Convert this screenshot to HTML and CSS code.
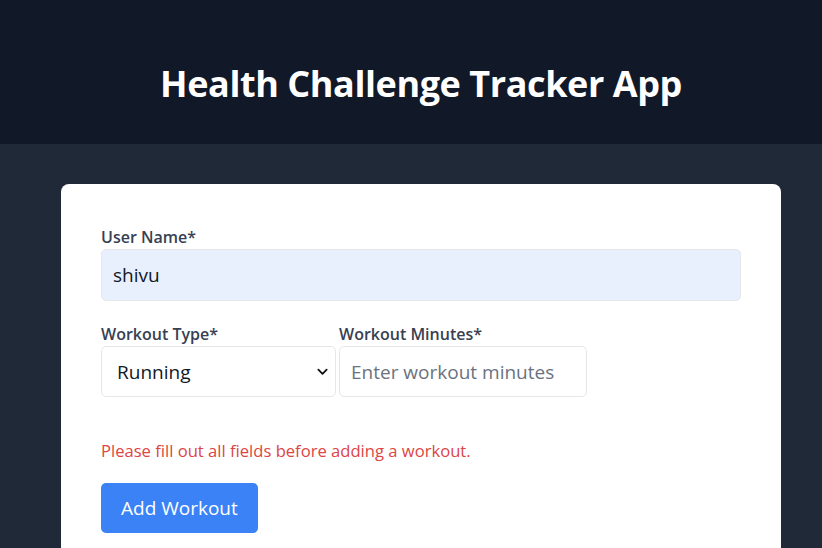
FILE: index.html
```html
<!DOCTYPE html>
<html lang="en">
<head>
<meta charset="utf-8">
<title>Health Challenge Tracker App</title>
<link rel="stylesheet" href="styles.css">
</head>
<body>
<div class="page">
  <header class="header">
    <h1 class="title">Health Challenge Tracker App</h1>
  </header>
  <main class="main">
    <section class="card">
      <div class="field">
        <label class="label" for="name">User Name*</label>
        <input class="input input-filled" id="name" type="text" value="shivu">
      </div>
      <div class="row">
        <div class="col">
          <label class="label" for="type">Workout Type*</label>
          <div class="select">
            <span class="select-text">Running</span>
            <svg class="chevron" viewBox="0 0 12 8" width="12" height="8"><path d="M1.5 1.5 L6 6 L10.5 1.5" fill="none" stroke="#111" stroke-width="2" stroke-linecap="round" stroke-linejoin="round"/></svg>
          </div>
        </div>
        <div class="col">
          <label class="label" for="mins">Workout Minutes*</label>
          <input class="input input-mins" id="mins" type="text" placeholder="Enter workout minutes">
        </div>
      </div>
      <p class="error">Please fill out all fields before adding a workout.</p>
      <button class="btn" type="button">Add Workout</button>
    </section>
  </main>
</div>
</body>
</html>
```
FILE: styles.css
```css
html, body {
  margin: 0;
  padding: 0;
  overflow: hidden;
  background: #1f2937;
}
body {
  font-family: "Open Sans", "Noto Sans", sans-serif;
  color: #374151;
}
.page {
  width: 842px;
  height: 548px;
  display: flex;
  flex-direction: column;
}
.header {
  background: #111827;
  height: 144px;
  flex: none;
  display: flex;
  align-items: center;
  justify-content: center;
}
.title {
  margin: 24px 0 0;
  color: #ffffff;
  font-size: 36px;
  font-weight: 700;
  line-height: 40px;
  letter-spacing: -0.42px;
}
.main {
  flex: 1;
  min-height: 0;
  padding-top: 40px;
  display: flex;
  flex-direction: column;
}
.card {
  flex: 1;
  width: 720px;
  margin: 0 auto;
  background: #ffffff;
  border-radius: 8px 8px 0 0;
  padding: 41px 40px 0;
  box-sizing: border-box;
}
.field {
  display: flex;
  flex-direction: column;
}
.label {
  display: block;
  font-size: 16px;
  font-weight: 600;
  line-height: 24px;
  color: #374151;
}
.input {
  box-sizing: border-box;
  font-family: inherit;
  border: 1px solid #e5e7eb;
  border-radius: 5px;
  outline: none;
  color: #111827;
}
.input-filled {
  width: 640px;
  height: 52px;
  background: #e8f0fe;
  font-size: 19px;
  padding: 0 11px;
}
.row {
  display: flex;
  gap: 3px;
  margin-top: 21px;
}
.col {
  display: flex;
  flex-direction: column;
}
.select {
  box-sizing: border-box;
  width: 235px;
  height: 51px;
  border: 1px solid #e5e7eb;
  border-radius: 5px;
  display: flex;
  align-items: center;
  justify-content: space-between;
  padding: 0 7px 0 15px;
  font-size: 19px;
  color: #111827;
}
.chevron {
  width: 11px;
  height: 8px;
}
.input-mins {
  width: 248px;
  height: 51px;
  background: #ffffff;
  font-size: 19px;
  padding: 0 11px;
}
.input-mins::placeholder {
  color: #6b7280;
}
.error {
  margin: 42px 0 20px;
  color: #dc4545;
  font-size: 16.6px;
  line-height: 24px;
}
.btn {
  font-family: inherit;
  background: #3b82f6;
  color: #ffffff;
  border: none;
  border-radius: 5px;
  height: 50px;
  padding: 0 20px;
  font-size: 19px;
}
```
